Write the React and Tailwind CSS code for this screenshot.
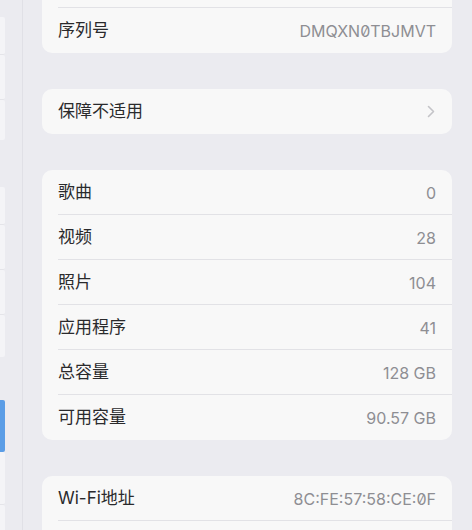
const font = { fontFamily: '"Inter", "Noto Sans CJK SC", sans-serif' }

const Row = ({ label, value, chevron, mono, last }) => (
  <div className="relative flex h-[45px] items-center justify-between pl-4 pr-4">
    <span className="text-[17px] text-[#2a2a2c]">{label}</span>
    {value && (
      <span className={`text-[16px] text-[#8e8e93] ${mono ? "[font-feature-settings:'zero']" : ''}`}>
        {value}
      </span>
    )}
    {chevron && (
      <svg width="8" height="13" viewBox="0 0 8 13" className="mr-[1px]">
        <path d="M1.5 1.5 L6.5 6.5 L1.5 11.5" fill="none" stroke="#c4c4c8" strokeWidth="1.6" strokeLinecap="round" strokeLinejoin="round" />
      </svg>
    )}
    {!last && <div className="absolute bottom-0 left-4 right-0 h-px bg-[#e2e2e6]" />}
  </div>
)

const Card = ({ children, className = '' }) => (
  <div className={`shrink-0 overflow-hidden rounded-[10px] bg-[#f8f8f8] ${className}`}>{children}</div>
)

const Cell = ({ h, blue, sep }) => (
  <div
    className={`w-[5px] shrink-0 rounded-r-[2px] ${blue ? 'bg-[#5b9de6]' : 'bg-[#f4f4f7]'} ${sep ? 'border-b border-[#e4e4e9]' : ''}`}
    style={{ height: h }}
  />
)

const Sidebar = () => (
  <div className="flex w-[23px] shrink-0 flex-col border-r border-[#e0e0e6] bg-[#ebebf0]">
    <div className="mt-[17px] flex flex-col">
      <Cell h={38} sep />
      <Cell h={45} sep />
      <Cell h={40} />
    </div>
    <div className="mt-[47px] flex flex-col">
      <Cell h={38} sep />
      <Cell h={45} sep />
      <Cell h={45} sep />
      <Cell h={42} />
    </div>
    <div className="mt-[43px] flex flex-col">
      <Cell h={52} blue />
      <Cell h={53} sep />
      <Cell h={40} />
    </div>
  </div>
)

export default function App() {
  return (
    <div className="flex h-[530px] w-[472px] overflow-hidden bg-[#ebebf0]" style={font}>
      <Sidebar />
      <div className="flex flex-1 flex-col gap-[36px] pl-[19px] pr-[20px]">
        <Card className="-mt-[37px]">
          <Row />
          <Row label="序列号" value="DMQXN0TBJMVT" mono last />
        </Card>
        <Card>
          <Row label="保障不适用" chevron last />
        </Card>
        <Card>
          <Row label="歌曲" value="0" />
          <Row label="视频" value="28" />
          <Row label="照片" value="104" />
          <Row label="应用程序" value="41" />
          <Row label="总容量" value="128 GB" />
          <Row label="可用容量" value="90.57 GB" last />
        </Card>
        <Card>
          <Row label="Wi-Fi地址" value="8C:FE:57:58:CE:0F" mono />
          <Row last />
        </Card>
      </div>
    </div>
  )
}
